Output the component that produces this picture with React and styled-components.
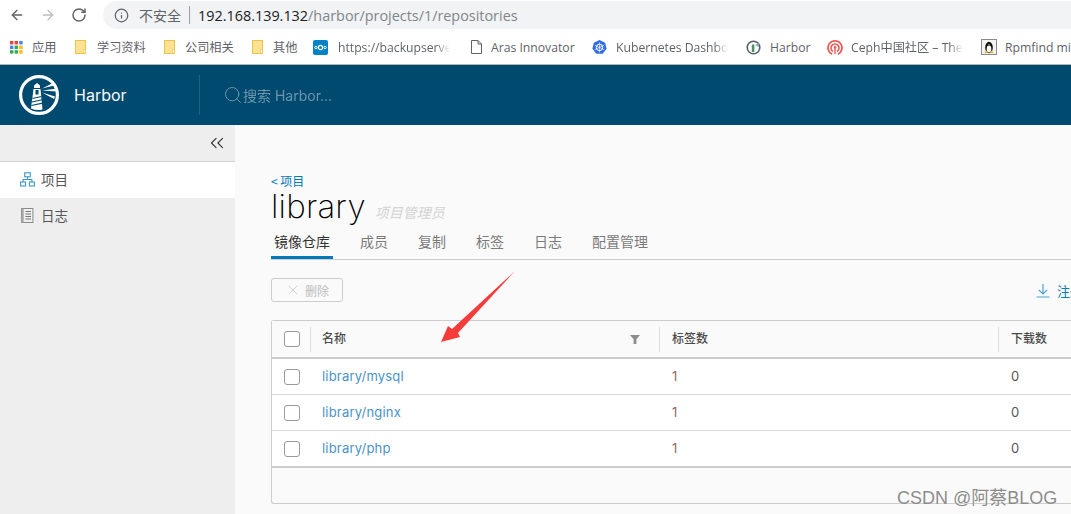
import styled, { createGlobalStyle } from "styled-components";
import { ArrowLeft, ArrowRight, RotateCw, Info, Search, X, ChevronsLeft } from "lucide-react";

const cjk = `"Noto Sans CJK SC", sans-serif`;

const Global = createGlobalStyle`
  html, body { margin: 0; padding: 0; background: #fafafa; }
  #root { width: 1071px; height: 514px; overflow: hidden; }
  * { box-sizing: border-box; }
`;

const Screen = styled.div`
  position: relative;
  width: 1071px;
  height: 514px;
  display: flex;
  flex-direction: column;
  overflow: hidden;
  font-family: "Inter", ${cjk};
`;

/* browser chrome */
const Toolbar = styled.div`
  height: 30px;
  background: #fff;
  display: flex;
  align-items: center;
  padding-left: 9px;
`;

const NavBtn = styled.div`
  width: 16px;
  height: 16px;
  margin-right: ${({ $gap }) => $gap}px;
  color: ${({ $off }) => ($off ? "#bdbdbd" : "#5f6368")};
  display: flex;
  align-items: center;
  justify-content: center;
`;

const Omnibox = styled.div`
  flex: 1;
  height: 28px;
  background: #f1f3f4;
  border-radius: 14px 0 0 14px;
  display: flex;
  align-items: center;
  padding-left: 11px;
  color: #5f6368;
  white-space: nowrap;
`;

const Insecure = styled.span`
  font: 14px ${cjk};
  margin-left: 10px;
  color: #5f6368;
`;

const OmniSep = styled.span`
  width: 1px;
  height: 18px;
  background: #9aa0a6;
  margin: 0 8px 0 8px;
`;

const Url = styled.span`
  font: 14.4px "Open Sans", sans-serif;
  color: #80868b;
  b { font-weight: 400; color: #202124; }
`;

const Bookmarks = styled.div`
  height: 35px;
  background: #fff;
  border-bottom: 1px solid #b4b4b4;
  display: flex;
  align-items: center;
  padding-left: 10px;
  overflow: hidden;
  white-space: nowrap;
`;

const Bookmark = styled.div`
  flex: none;
  display: flex;
  align-items: center;
  width: ${({ $w }) => $w}px;
  gap: ${({ $gap }) => $gap}px;
  font: 12.2px "Open Sans", ${cjk};
  color: #5f6368;
`;

const BookmarkLabel = styled.span`
  flex: 1;
  min-width: 0;
  overflow: hidden;
  ${({ $fade }) =>
    $fade &&
    `-webkit-mask-image: linear-gradient(to right, #000 ${$fade}px, transparent ${$fade + 14}px);`}
`;

/* harbor header */
const Header = styled.header`
  height: 60px;
  background: #004a70;
  display: flex;
  align-items: center;
  padding-left: 19px;
  color: #fff;
  flex: none;
`;

const Brand = styled.div`
  width: 180px;
  display: flex;
  align-items: center;
  gap: 15px;
  font: 400 16px "Inter", sans-serif;
  color: #fafafa;
`;

const HeaderSep = styled.div`
  width: 1px;
  height: 40px;
  background: #1d6186;
`;

const SearchBox = styled.div`
  display: flex;
  align-items: center;
  margin-left: 23px;
  color: #7fa3b8;
  font: 14px "Inter", ${cjk};
  opacity: 0.85;
`;

const Body = styled.div`
  flex: 1;
  display: flex;
  min-height: 0;
`;

/* sidebar */
const Sidebar = styled.aside`
  width: 235px;
  flex: none;
  background: #eeeeee;
`;

const Collapse = styled.div`
  height: 37px;
  border-bottom: 1px solid #cfcfcf;
  display: flex;
  align-items: center;
  justify-content: flex-end;
  padding-right: 7px;
  color: #333;
`;

const NavItem = styled.div`
  height: 36px;
  display: flex;
  align-items: center;
  gap: 6px;
  padding: 0 0 2px 20px;
  background: ${({ $active }) => ($active ? "#fff" : "transparent")};
  font: 13.5px ${cjk};
  color: #565656;
`;

/* main */
const Main = styled.main`
  flex: 1;
  min-width: 0;
  overflow: hidden;
  background: #fafafa;
  padding: 49px 0 0 36px;
`;

const BackLink = styled.div`
  font: 12px/14px ${cjk};
  color: #0079b8;
`;

const TitleRow = styled.div`
  display: flex;
  align-items: baseline;
  gap: 9px;
  height: 36px;
`;

const Title = styled.h1`
  margin: 0;
  font: 200 33px/36px "Inter", sans-serif;
  letter-spacing: 0.2px;
  color: #000;
`;

const Role = styled.span`
  font: italic 14px ${cjk};
  color: #d4d4d4;
`;

const Tabs = styled.nav`
  width: 1000px;
  height: 31px;
  margin-top: 5px;
  border-bottom: 1px solid #cccccc;
  display: flex;
  gap: 24px;
`;

const Tab = styled.div`
  height: 30px;
  padding: 0 3px 3px;
  display: flex;
  align-items: center;
  font: 14px ${cjk};
  color: ${({ $active }) => ($active ? "#333" : "#7a7a7a")};
  border-bottom: 3px solid ${({ $active }) => ($active ? "#0079b8" : "transparent")};
`;

const Actions = styled.div`
  display: grid;
  grid-template-columns: 765px auto;
  align-items: center;
  height: 24px;
  margin-top: 18px;
  white-space: nowrap;
`;

const DeleteBtn = styled.div`
  width: 72px;
  height: 24px;
  border: 1px solid #cccccc;
  border-radius: 3px;
  display: flex;
  align-items: center;
  justify-content: center;
  gap: 4px;
  font: 12px ${cjk};
  color: #bdbdbd;
`;

const PushBtn = styled.div`
  display: flex;
  align-items: center;
  gap: 7px;
  font: 13px ${cjk};
  color: #0079b8;
`;

const Grid = styled.div`
  width: 1000px;
  margin-top: 18px;
  border: 1px solid #cccccc;
  border-right: none;
  border-radius: 3px 0 0 3px;
  background: #fafafa;
`;

const Row = styled.div`
  display: grid;
  grid-template-columns: 38px 349px 339px 1fr;
  align-items: center;
  height: ${({ $head, $last }) => ($head ? 38 : $last ? 37 : 36)}px;
  background: ${({ $head }) => ($head ? "#fafafa" : "#fff")};
  border-bottom: ${({ $head, $last }) =>
    $head || $last ? "2px solid #cccccc" : "1px solid #dcdcdc"};
`;

const CheckCell = styled.div`
  height: 100%;
  display: flex;
  align-items: center;
  padding-left: 12px;
`;

const Checkbox = styled.span`
  width: 16px;
  height: 16px;
  border: 1.3px solid #9a9a9a;
  border-radius: 3px;
  background: #fff;
`;

const HeadCell = styled.div`
  height: 25px;
  border-left: 1px solid #dcdcdc;
  padding: 0 19px 4px ${({ $pad }) => $pad || 11}px;
  display: flex;
  align-items: center;
  justify-content: space-between;
  font: 500 12px ${cjk};
  color: #4a4a4a;
  white-space: nowrap;
`;

const Cell = styled.div`
  padding: 0 0 1px ${({ $pad }) => $pad || 12}px;
  font: 13px "Inter", sans-serif;
  letter-spacing: 0.2px;
  color: ${({ $color }) => $color || "#565656"};
`;

const GridFooter = styled.div`
  height: 35px;
`;

const FilterGlyph = styled.svg`
  margin-top: 5px;
`;

const Arrow = styled.svg`
  position: absolute;
  left: 430px;
  top: 265px;
  pointer-events: none;
`;

const Watermark = styled.div`
  position: absolute;
  left: 897px;
  top: 483px;
  font: 18px "Liberation Sans", ${cjk};
  color: #8c8c8c;
  text-shadow: 0 0 2px #fff;
  white-space: nowrap;
`;

const Folder = () => (
  <svg width="11" height="14" viewBox="0 0 11 14">
    <rect x=".5" y=".5" width="10" height="13" fill="#fde293" stroke="#eec34a" />
    <rect x="8.5" y="10" width="2" height="3" fill="#fff" stroke="#eec34a" strokeWidth=".6" />
  </svg>
);

const AppsIcon = () => {
  const colors = ["#ea4335", "#ea4335", "#4285f4", "#4285f4", "#34a853", "#fbbc04", "#34a853", "#34a853", "#fbbc04"];
  return (
    <svg width="13" height="13" viewBox="0 0 13 13">
      {colors.map((c, i) => (
        <rect key={i} x={(i % 3) * 4.6} y={Math.floor(i / 3) * 4.6} width="3.4" height="3.4" fill={c} />
      ))}
    </svg>
  );
};

const NextcloudIcon = () => (
  <svg width="15" height="15" viewBox="0 0 15 15">
    <rect width="15" height="15" rx="2" fill="#0082c9" />
    <circle cx="7.5" cy="7.5" r="2.1" fill="none" stroke="#fff" strokeWidth="1.2" />
    <circle cx="2.9" cy="7.5" r="1.2" fill="none" stroke="#fff" strokeWidth="1" />
    <circle cx="12.1" cy="7.5" r="1.2" fill="none" stroke="#fff" strokeWidth="1" />
  </svg>
);

const DocIcon = () => (
  <svg width="11" height="14" viewBox="0 0 11 14" fill="#fff" stroke="#5f6368">
    <path d="M.5.5h6.5l3.5 3.5v9.5H.5z" />
    <path d="M7 .5V4h3.5" fill="none" />
  </svg>
);

const KubeIcon = () => (
  <svg width="15" height="15" viewBox="0 0 15 15">
    <path d="M7.5 0l5.6 2.7 1.5 6-3.9 5.1H4.3L.4 8.7l1.5-6z" fill="#326ce5" />
    <circle cx="7.5" cy="7.4" r="3.2" fill="none" stroke="#fff" strokeWidth="1" />
    <path d="M7.5 2.4v10M2.8 5.2l9.4 4.4M12.2 5.2L2.8 9.6" stroke="#fff" strokeWidth=".6" />
  </svg>
);

const SmallHarborIcon = () => (
  <svg width="15" height="15" viewBox="0 0 15 15">
    <circle cx="7.5" cy="7.5" r="6.3" fill="#fff" stroke="#55606a" strokeWidth="1.6" />
    <rect x="5.8" y="4.5" width="2.6" height="7.5" fill="#4f8f6a" />
    <path d="M9 5l4-2v4z" fill="#7fa8c9" />
  </svg>
);

const CephIcon = () => (
  <svg width="16" height="16" viewBox="0 0 16 16" fill="none" stroke="#ef5c55">
    <path d="M5.2 15.2A7 7 0 1 1 10.8 15.2" strokeWidth="1.8" />
    <path d="M6 12.4a4 4 0 1 1 4 0" strokeWidth="1.6" />
    <circle cx="8" cy="8.4" r="1.3" fill="#ef5c55" stroke="none" />
    <path d="M8 9v6" strokeWidth="1.4" />
  </svg>
);

const TuxIcon = () => (
  <svg width="16" height="16" viewBox="0 0 16 16">
    <rect x=".5" y=".5" width="15" height="15" fill="#f4f4f4" stroke="#8a8a8a" />
    <ellipse cx="8" cy="8.5" rx="3.8" ry="5.8" fill="#111" />
    <ellipse cx="8" cy="10" rx="2.3" ry="3.4" fill="#fff" />
    <path d="M3 14l2.6-2.6L7 14zM13 14l-2.6-2.6L9 14z" fill="#e8b020" />
    <path d="M7 5h2l-1 1.2z" fill="#e8b020" />
  </svg>
);

const HarborLogo = () => (
  <svg width="40" height="40" viewBox="0 0 40 40">
    <circle cx="20" cy="20" r="18.4" fill="none" stroke="#fff" strokeWidth="3.2" />
    <path d="M15 10.5l3-2.5 3 2.5v2.5h-6z" fill="#fff" />
    <path d="M14.5 14h7l2 20.5a18 18 0 0 1-11.5-1z" fill="#fff" />
    <rect x="16.5" y="15" width="3" height="4.5" fill="#004a70" />
    <path d="M13.5 23.5l9-2M13 27l10-2.2M12.5 30.5l11-2.4" stroke="#004a70" strokeWidth="1.1" />
    <path d="M23 13.5L34 8l1 2.5zM23 15.5l13.6-1.7.3 2.6zM23 17.5l13 4-1 2.4z" fill="#fff" />
  </svg>
);

const ProjectsIcon = () => (
  <svg width="15" height="15" viewBox="0 0 15 15" fill="none" stroke="#3c97c9" strokeWidth="1.1">
    <rect x="4.7" y=".8" width="5.6" height="4" />
    <rect x=".6" y="10" width="5" height="4" />
    <rect x="9.4" y="10" width="5" height="4" />
    <path d="M7.5 4.8v2.7M3.1 10V7.5h8.8V10" />
  </svg>
);

const LogsIcon = () => (
  <svg width="13" height="15" viewBox="0 0 13 15" style={{ marginLeft: 1, marginRight: 1 }}>
    <rect x=".5" y=".5" width="11.4" height="14" fill="#efefef" stroke="#8a8a8a" />
    <rect x=".5" y=".5" width="2.2" height="14" fill="#a8a8a8" />
    <path d="M4.5 3.5h5.5M4.5 6h5.5M4.5 8.5h5.5M4.5 11h5.5" stroke="#777" />
  </svg>
);

const FilterIcon = () => (
  <FilterGlyph width="10" height="9" viewBox="0 0 10 9">
    <path d="M0 0h10L6.4 4.2V9H3.6V4.2z" fill="#8c8c8c" />
  </FilterGlyph>
);

const PushIcon = () => (
  <svg width="14" height="15" viewBox="0 0 14 15" fill="none" stroke="#4d9fd0" strokeWidth="1.2">
    <path d="M7 1v10M2.8 6.8L7 11l4.2-4.2M.5 14h13" />
  </svg>
);

const bookmarks = [
  { w: 65, gap: 9, icon: <AppsIcon />, label: "应用" },
  { w: 89, gap: 11, icon: <Folder />, label: "学习资料" },
  { w: 88, gap: 10, icon: <Folder />, label: "公司相关" },
  { w: 61, gap: 10, icon: <Folder />, label: "其他" },
  { w: 158, gap: 10, icon: <NextcloudIcon />, label: "https://backupserver", fade: 98 },
  { w: 121, gap: 9, icon: <DocIcon />, label: "Aras Innovator" },
  { w: 154, gap: 9, icon: <KubeIcon />, label: "Kubernetes Dashboard", fade: 98 },
  { w: 81, gap: 9, icon: <SmallHarborIcon />, label: "Harbor" },
  { w: 154, gap: 8, icon: <CephIcon />, label: "Ceph中国社区 – The Future", fade: 98 },
  { w: 120, gap: 8, icon: <TuxIcon />, label: "Rpmfind mirror" },
];

const tabs = ["镜像仓库", "成员", "复制", "标签", "日志", "配置管理"];
const repos = ["library/mysql", "library/nginx", "library/php"];

export default function App() {
  return (
    <Screen>
      <Global />
      <Toolbar>
        <NavBtn $gap={15}><ArrowLeft size={20} strokeWidth={2} /></NavBtn>
        <NavBtn $gap={15} $off><ArrowRight size={20} strokeWidth={2} /></NavBtn>
        <NavBtn $gap={16}><RotateCw size={16} strokeWidth={2.2} /></NavBtn>
        <Omnibox>
          <Info size={15} strokeWidth={2} />
          <Insecure>不安全</Insecure>
          <OmniSep />
          <Url><b>192.168.139.132</b>/harbor/projects/1/repositories</Url>
        </Omnibox>
      </Toolbar>
      <Bookmarks>
        {bookmarks.map((b) => (
          <Bookmark key={b.label} $w={b.w} $gap={b.gap}>
            {b.icon}
            <BookmarkLabel $fade={b.fade}>{b.label}</BookmarkLabel>
          </Bookmark>
        ))}
      </Bookmarks>
      <Header>
        <Brand><HarborLogo />Harbor</Brand>
        <HeaderSep />
        <SearchBox><Search size={20} strokeWidth={1.2} />搜索 Harbor...</SearchBox>
      </Header>
      <Body>
        <Sidebar>
          <Collapse><ChevronsLeft size={22} strokeWidth={1.2} /></Collapse>
          <NavItem $active><ProjectsIcon />项目</NavItem>
          <NavItem><LogsIcon />日志</NavItem>
        </Sidebar>
        <Main>
          <BackLink>&lt; 项目</BackLink>
          <TitleRow>
            <Title>library</Title>
            <Role>项目管理员</Role>
          </TitleRow>
          <Tabs>
            {tabs.map((t, i) => (
              <Tab key={t} $active={i === 0}>{t}</Tab>
            ))}
          </Tabs>
          <Actions>
            <DeleteBtn><X size={16} strokeWidth={1} />删除</DeleteBtn>
            <PushBtn><PushIcon />注册</PushBtn>
          </Actions>
          <Grid>
            <Row $head>
              <CheckCell><Checkbox /></CheckCell>
              <HeadCell>名称<FilterIcon /></HeadCell>
              <HeadCell $pad={12}>标签数</HeadCell>
              <HeadCell $pad={12}>下载数</HeadCell>
            </Row>
            {repos.map((r, i) => (
              <Row key={r} $last={i === repos.length - 1}>
                <CheckCell><Checkbox /></CheckCell>
                <Cell $color="#4a93c6">{r}</Cell>
                <Cell $color="#8f6a62" $pad={13}>1</Cell>
                <Cell $pad={13}>0</Cell>
              </Row>
            ))}
            <GridFooter />
          </Grid>
        </Main>
      </Body>
      <Arrow width="90" height="85" viewBox="430 265 90 85">
        <path d="M515 271L458 333l2 4-19 5 7-16 4 3z" fill="#f73b3b" />
      </Arrow>
      <Watermark>CSDN @阿蔡BLOG</Watermark>
    </Screen>
  );
}
